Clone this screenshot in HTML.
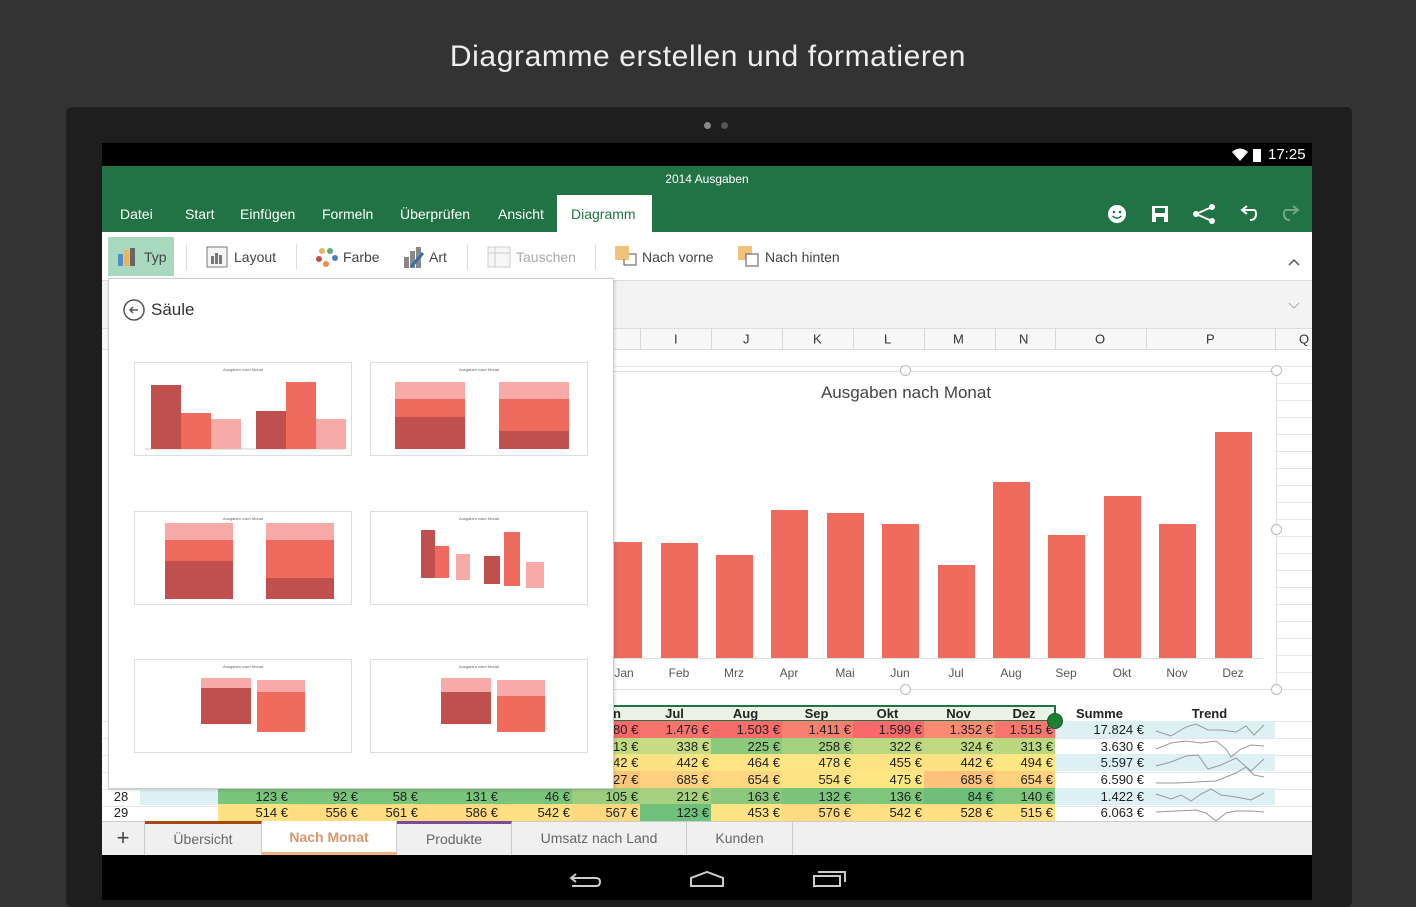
<!DOCTYPE html>
<html><head><meta charset="utf-8"><style>
*{margin:0;padding:0;box-sizing:border-box}
body{width:1416px;height:900px;background:#333;position:relative;overflow:hidden;font-family:"Liberation Sans",sans-serif}
.a{position:absolute}
.row{position:absolute;display:flex;height:17px;font-size:13px;color:#222}
.row div{text-align:right;padding-right:2px;line-height:17px;white-space:nowrap;overflow:hidden}
.tab{position:absolute;top:214px;color:#fff;font-size:14px;transform:translateY(-50%)}
.rb{position:absolute;top:257px;transform:translateY(-50%);font-size:14px;color:#444}
.th{position:absolute;top:339px;transform:translateY(-50%);font-size:13px;color:#333}
.vl{position:absolute;top:328px;width:1px;height:22px;background:#d8d8d8}
.st{position:absolute;top:821px;height:34px;line-height:34px;text-align:center;font-size:14px;color:#666;border-right:1px solid #ccc}
.ml{position:absolute;top:673px;transform:translate(-50%,-50%);font-size:12px;color:#555}
.bar{position:absolute;background:#ef6b5e;width:37px}
.thb{position:absolute;width:218px;height:94px;background:#fff;border:1px solid #ddd}
</style></head><body>
<div class="a" style="left:0;width:1416px;top:40px;text-align:center;color:#eee;font-size:30px;letter-spacing:.6px">Diagramme erstellen und formatieren</div>
<div class="a" style="left:66px;top:107px;width:1286px;height:800px;background:#1e1e1e;border-radius:6px"></div>
<div class="a" style="left:704px;top:122px;width:7px;height:7px;border-radius:50%;background:#888"></div>
<div class="a" style="left:721px;top:122px;width:7px;height:7px;border-radius:50%;background:#555"></div>
<div class="a" style="left:102px;top:143px;width:1210px;height:757px;background:#fff"></div>
<div class="a" style="left:102px;top:143px;width:1210px;height:23px;background:#000"></div>
<svg class="a" style="left:1230px;top:146px" width="40" height="18"><path d="M2 6 Q10 -1 18 6 L10 15 Z" fill="#fff"/><rect x="23" y="3" width="8" height="13" fill="#fff"/></svg>
<div class="a" style="left:1268px;top:146px;color:#fff;font-size:15px">17:25</div>
<div class="a" style="left:102px;top:166px;width:1210px;height:66px;background:#217346"></div>
<div class="a" style="left:102px;top:172px;width:1210px;text-align:center;color:#fff;font-size:12px">2014 Ausgaben</div>
<div class="tab" style="left:120px">Datei</div>
<div class="tab" style="left:185px">Start</div>
<div class="tab" style="left:240px">Einfügen</div>
<div class="tab" style="left:322px">Formeln</div>
<div class="tab" style="left:400px">Überprüfen</div>
<div class="tab" style="left:498px">Ansicht</div>
<div class="a" style="left:557px;top:195px;width:95px;height:38px;background:#fff"></div>
<div class="tab" style="left:571px;color:#217346">Diagramm</div>
<svg class="a" style="left:1100px;top:198px" width="210" height="32">
<circle cx="17" cy="16" r="9" fill="#fff"/><circle cx="14" cy="14" r="1.3" fill="#217346"/><circle cx="20" cy="14" r="1.3" fill="#217346"/><path d="M12.5 18 Q17 22 21.5 18" stroke="#217346" stroke-width="1.5" fill="none"/>
<rect x="52" y="8" width="16" height="16" fill="#fff"/><rect x="55" y="10" width="10" height="5" fill="#217346"/><rect x="56" y="19" width="8" height="5" fill="#217346"/>
<circle cx="112" cy="9" r="3" fill="#fff"/><circle cx="96" cy="16" r="3" fill="#fff"/><circle cx="112" cy="23" r="3" fill="#fff"/><path d="M112 9 L96 16 L112 23" stroke="#fff" stroke-width="2" fill="none"/>
<path d="M143 12 L154 12 Q156 12 156 16 Q156 22 150 22" stroke="#fff" stroke-width="2" fill="none"/><path d="M147 8 L142 12 L147 16" stroke="#fff" stroke-width="2" fill="none"/>
<path d="M197 12 L186 12 Q184 12 184 16 Q184 22 190 22" stroke="#6fa888" stroke-width="2" fill="none"/><path d="M193 8 L198 12 L193 16" stroke="#6fa888" stroke-width="2" fill="none"/>
</svg>
<div class="a" style="left:102px;top:280px;width:1210px;height:1px;background:#ddd"></div>
<div class="a" style="left:108px;top:237px;width:66px;height:39px;background:#a8d8bd"></div>
<svg class="a" style="left:116px;top:248px" width="24" height="18"><rect x="2" y="6" width="5" height="12" fill="#4a8fce"/><rect x="8" y="2" width="5" height="16" fill="#e9b35f"/><rect x="14" y="0" width="5" height="18" fill="#666"/></svg>
<div class="rb" style="left:144px">Typ</div>
<div class="a" style="left:186px;top:244px;width:1px;height:26px;background:#ddd"></div>
<svg class="a" style="left:206px;top:246px" width="22" height="22"><rect x="1" y="1" width="20" height="20" fill="#f4f4f4" stroke="#777"/><rect x="5" y="10" width="3" height="8" fill="#777"/><rect x="9" y="7" width="3" height="11" fill="#777"/><rect x="13" y="9" width="3" height="9" fill="#777"/></svg>
<div class="rb" style="left:234px">Layout</div>
<div class="a" style="left:296px;top:244px;width:1px;height:26px;background:#ddd"></div>
<svg class="a" style="left:315px;top:246px" width="24" height="22"><circle cx="7" cy="5" r="3" fill="#e9b35f"/><circle cx="15" cy="5" r="3" fill="#5aab84"/><circle cx="4" cy="13" r="3" fill="#c0504d"/><circle cx="20" cy="12" r="3" fill="#4a7fc0"/><circle cx="11" cy="18" r="3" fill="#f08a4b"/></svg>
<div class="rb" style="left:343px">Farbe</div>
<svg class="a" style="left:403px;top:245px" width="24" height="24"><rect x="1" y="12" width="5" height="11" fill="#888"/><rect x="7" y="6" width="5" height="17" fill="#888"/><rect x="13" y="2" width="5" height="21" fill="#888"/><path d="M8 22 L20 8" stroke="#3b6ea8" stroke-width="3"/></svg>
<div class="rb" style="left:429px">Art</div>
<div class="a" style="left:467px;top:244px;width:1px;height:26px;background:#ddd"></div>
<svg class="a" style="left:487px;top:245px" width="24" height="24"><rect x="1" y="2" width="22" height="20" fill="#f6f6f6" stroke="#ccc"/><path d="M1 8 H23 M8 2 V22" stroke="#ccc"/></svg>
<div class="rb" style="left:516px;color:#aaa">Tauschen</div>
<div class="a" style="left:595px;top:244px;width:1px;height:26px;background:#ddd"></div>
<svg class="a" style="left:614px;top:245px" width="24" height="22"><rect x="1" y="1" width="14" height="14" fill="#f0c27a"/><path d="M10 14 V20 H22 V9 H15" stroke="#555" fill="none"/></svg>
<div class="rb" style="left:642px">Nach vorne</div>
<svg class="a" style="left:737px;top:245px" width="24" height="22"><rect x="1" y="1" width="14" height="14" fill="#f0c27a"/><rect x="9" y="9" width="12" height="12" fill="#fff" stroke="#555"/></svg>
<div class="rb" style="left:765px">Nach hinten</div>
<svg class="a" style="left:1287px;top:257px" width="14" height="10"><path d="M2 8 L7 3 L12 8" stroke="#555" stroke-width="1.5" fill="none"/></svg>
<div class="a" style="left:102px;top:281px;width:1210px;height:47px;background:#f3f3f3"></div>
<svg class="a" style="left:1288px;top:302px" width="12" height="8"><path d="M1 1 L6 6 L11 1" stroke="#aaa" fill="none"/></svg>
<div class="a" style="left:102px;top:328px;width:1210px;height:22px;background:#f7f7f7;border-top:1px solid #ddd;border-bottom:1px solid #ddd"></div>
<div class="vl" style="left:640px"></div><div class="vl" style="left:711px"></div><div class="vl" style="left:782px"></div><div class="vl" style="left:853px"></div><div class="vl" style="left:924px"></div><div class="vl" style="left:995px"></div><div class="vl" style="left:1055px"></div><div class="vl" style="left:1146px"></div><div class="vl" style="left:1275px"></div>
<div class="th" style="left:674px">I</div><div class="th" style="left:743px">J</div><div class="th" style="left:813px">K</div><div class="th" style="left:884px">L</div><div class="th" style="left:953px">M</div><div class="th" style="left:1019px">N</div><div class="th" style="left:1095px">O</div><div class="th" style="left:1206px">P</div><div class="th" style="left:1299px">Q</div>
<div class="a" style="left:613px;top:350px;width:699px;height:355px;background:repeating-linear-gradient(#fff 0 16px,#e6e6e6 16px 17px)"></div>
<div class="a" style="left:613px;top:371px;width:664px;height:319px;background:#fff;border:1px solid #ddd"></div>
<div class="a" style="left:706px;top:383px;width:400px;text-align:center;font-size:17px;color:#444">Ausgaben nach Monat</div>
<div class="bar" style="left:605px;top:542px;height:116px"></div>
<div class="bar" style="left:661px;top:543px;height:115px"></div>
<div class="bar" style="left:716px;top:555px;height:103px"></div>
<div class="bar" style="left:771px;top:510px;height:148px"></div>
<div class="bar" style="left:827px;top:513px;height:145px"></div>
<div class="bar" style="left:882px;top:524px;height:134px"></div>
<div class="bar" style="left:938px;top:565px;height:93px"></div>
<div class="bar" style="left:993px;top:482px;height:176px"></div>
<div class="bar" style="left:1048px;top:535px;height:123px"></div>
<div class="bar" style="left:1104px;top:496px;height:162px"></div>
<div class="bar" style="left:1159px;top:524px;height:134px"></div>
<div class="bar" style="left:1215px;top:432px;height:226px"></div>
<div class="a" style="left:613px;top:658px;width:650px;height:1px;background:#ddd"></div>
<div class="ml" style="left:624px">Jan</div><div class="ml" style="left:679px">Feb</div><div class="ml" style="left:734px">Mrz</div><div class="ml" style="left:789px">Apr</div><div class="ml" style="left:845px">Mai</div><div class="ml" style="left:900px">Jun</div><div class="ml" style="left:956px">Jul</div><div class="ml" style="left:1011px">Aug</div><div class="ml" style="left:1066px">Sep</div><div class="ml" style="left:1122px">Okt</div><div class="ml" style="left:1177px">Nov</div><div class="ml" style="left:1233px">Dez</div>
<div class="a" style="left:1271px;top:365px;width:11px;height:11px;border:1px solid #bbb;border-radius:50%;background:#fff"></div>
<div class="a" style="left:1271px;top:524px;width:11px;height:11px;border:1px solid #bbb;border-radius:50%;background:#fff"></div>
<div class="a" style="left:1271px;top:684px;width:11px;height:11px;border:1px solid #bbb;border-radius:50%;background:#fff"></div>
<div class="a" style="left:900px;top:684px;width:11px;height:11px;border:1px solid #bbb;border-radius:50%;background:#fff"></div>
<div class="a" style="left:900px;top:365px;width:11px;height:11px;border:1px solid #bbb;border-radius:50%;background:#fff"></div>
<div class="a" style="left:102px;top:705px;width:1210px;height:116px;background:repeating-linear-gradient(#fff 0 16px,#e6e6e6 16px 17px)"></div>
<div class="row" style="left:613px;top:705px;font-weight:bold;background:#e9f2e5;border-top:2px solid #217346;border-bottom:2px solid #217346">
<div style="width:27px;text-align:left;line-height:14px">n</div><div style="width:71px;text-align:center;line-height:14px">Jul</div><div style="width:71px;text-align:center;line-height:14px">Aug</div><div style="width:71px;text-align:center;line-height:14px">Sep</div><div style="width:71px;text-align:center;line-height:14px">Okt</div><div style="width:71px;text-align:center;line-height:14px">Nov</div><div style="width:60px;text-align:center;line-height:14px">Dez</div></div>
<div class="a" style="left:1054px;top:705px;width:2px;height:16px;background:#217346"></div>
<div class="row" style="left:1055px;top:705px;font-weight:bold"><div style="width:91px;text-align:center">Summe</div><div style="width:129px;text-align:center">Trend</div></div>
<div class="row" style="left:613px;top:721px"><div style="width:27px;background:#f8696b">80 €</div><div style="width:71px;background:#f8736e">1.476 €</div><div style="width:71px;background:#f86b6b">1.503 €</div><div style="width:71px;background:#f98070">1.411 €</div><div style="width:71px;background:#f8696b">1.599 €</div><div style="width:71px;background:#f98b72">1.352 €</div><div style="width:60px;background:#f8766e">1.515 €</div><div style="width:91px;background:#ddf0f4">17.824 €</div><div style="width:129px;background:#ddf0f4"></div></div>
<div class="row" style="left:613px;top:738px"><div style="width:27px;background:#c0da81">13 €</div><div style="width:71px;background:#c6dc82">338 €</div><div style="width:71px;background:#8dc97d">225 €</div><div style="width:71px;background:#a4d07f">258 €</div><div style="width:71px;background:#bcd880">322 €</div><div style="width:71px;background:#bfd981">324 €</div><div style="width:60px;background:#bad880">313 €</div><div style="width:91px">3.630 €</div></div>
<div class="row" style="left:613px;top:754px"><div style="width:27px;background:#fde383">42 €</div><div style="width:71px;background:#fde283">442 €</div><div style="width:71px;background:#fee483">464 €</div><div style="width:71px;background:#fee583">478 €</div><div style="width:71px;background:#fee383">455 €</div><div style="width:71px;background:#fde283">442 €</div><div style="width:60px;background:#fee683">494 €</div><div style="width:91px;background:#ddf0f4">5.597 €</div><div style="width:129px;background:#ddf0f4"></div></div>
<div class="row" style="left:613px;top:771px"><div style="width:27px;background:#fcc57c">27 €</div><div style="width:71px;background:#fdd17f">685 €</div><div style="width:71px;background:#fdd880">654 €</div><div style="width:71px;background:#fee382">554 €</div><div style="width:71px;background:#fee783">475 €</div><div style="width:71px;background:#fcc27b">685 €</div><div style="width:60px;background:#fdd27f">654 €</div><div style="width:91px">6.590 €</div></div>
<div class="row" style="left:102px;top:788px"><div style="width:38px;text-align:center;padding:0">28</div><div style="width:78px;background:#ddf0f4"></div><div style="width:72px;background:#7bc47c">123 €</div><div style="width:70px;background:#7bc47c">92 €</div><div style="width:60px;background:#7bc47c">58 €</div><div style="width:80px;background:#7bc47c">131 €</div><div style="width:72px;background:#7bc47c">46 €</div><div style="width:68px;background:#9ccd7e">105 €</div><div style="width:71px;background:#a8d17f">212 €</div><div style="width:71px;background:#8bc87d">163 €</div><div style="width:71px;background:#7cc47c">132 €</div><div style="width:71px;background:#7fc57c">136 €</div><div style="width:71px;background:#6fbf7a">84 €</div><div style="width:60px;background:#7fc57c">140 €</div><div style="width:91px;background:#ddf0f4">1.422 €</div><div style="width:129px;background:#ddf0f4"></div></div>
<div class="row" style="left:102px;top:804px"><div style="width:38px;text-align:center;padding:0">29</div><div style="width:78px"></div><div style="width:72px;background:#fee182">514 €</div><div style="width:70px;background:#fedd81">556 €</div><div style="width:60px;background:#fedc81">561 €</div><div style="width:80px;background:#feda81">586 €</div><div style="width:72px;background:#fedf82">542 €</div><div style="width:68px;background:#fed880">567 €</div><div style="width:71px;background:#6fc07a">123 €</div><div style="width:71px;background:#fee382">453 €</div><div style="width:71px;background:#fedb81">576 €</div><div style="width:71px;background:#fedf82">542 €</div><div style="width:71px;background:#fee082">528 €</div><div style="width:60px;background:#fee182">515 €</div><div style="width:91px">6.063 €</div></div>
<svg class="a" style="left:1146px;top:721px" width="129" height="100"><g stroke="#999" fill="none" stroke-width="1">
<polyline points="10,10 25,15 40,6 50,3 62,9 75,9 90,11 100,5 108,14 118,4"/>
<polyline points="10,28 25,22 40,20 55,22 70,20 80,28 85,36 95,28 105,24 118,25"/>
<polyline points="10,45 25,41 40,35 52,34 62,48 75,44 90,37 105,50 118,38"/>
<polyline points="10,62 30,62 50,61 70,60 90,52 100,46 108,54 118,56"/>
<polyline points="10,73 25,78 35,74 45,80 55,73 65,68 75,74 90,76 105,79 118,72"/>
<polyline points="10,91 30,90 50,89 60,92 70,100 80,92 90,90 105,90 118,91"/>
</g></svg>
<div class="a" style="left:1047px;top:713px;width:16px;height:16px;border-radius:50%;background:#1e7e34;border:1px solid #0e5c22"></div>
<div class="a" style="left:108px;top:278px;width:506px;height:511px;background:#fff;border:1px solid #ccc;box-shadow:1px 1px 3px rgba(0,0,0,.15)"></div>
<svg class="a" style="left:122px;top:298px" width="24" height="24"><circle cx="12" cy="12" r="10" stroke="#555" stroke-width="1.5" fill="none"/><path d="M16 12 H8 M11 9 L8 12 L11 15" stroke="#555" stroke-width="1.5" fill="none"/></svg>
<div class="a" style="left:151px;top:300px;font-size:17px;color:#333">Säule</div>
<div class="thb" style="left:134px;top:362px"><svg width="216" height="92"><text x="108" y="8" font-size="4" text-anchor="middle" fill="#666">Ausgaben nach Monat</text><line x1="10" y1="86" x2="210" y2="86" stroke="#ccc"/><rect x="16" y="22" width="30" height="64" fill="#c0504d"/><rect x="46" y="50" width="30" height="36" fill="#ef6b5e"/><rect x="76" y="56" width="30" height="30" fill="#f7aaa7"/><rect x="121" y="48" width="30" height="38" fill="#c0504d"/><rect x="151" y="19" width="30" height="67" fill="#ef6b5e"/><rect x="181" y="56" width="30" height="30" fill="#f7aaa7"/></svg></div>
<div class="thb" style="left:370px;top:362px"><svg width="216" height="92"><text x="108" y="8" font-size="4" text-anchor="middle" fill="#666">Ausgaben nach Monat</text><rect x="24" y="19" width="70" height="17" fill="#f7aaa7"/><rect x="24" y="36" width="70" height="18" fill="#ef6b5e"/><rect x="24" y="54" width="70" height="32" fill="#c0504d"/><rect x="128" y="19" width="70" height="17" fill="#f7aaa7"/><rect x="128" y="36" width="70" height="32" fill="#ef6b5e"/><rect x="128" y="68" width="70" height="18" fill="#c0504d"/></svg></div>
<div class="thb" style="left:134px;top:511px"><svg width="216" height="92"><text x="108" y="8" font-size="4" text-anchor="middle" fill="#666">Ausgaben nach Monat</text><rect x="30" y="11" width="68" height="17" fill="#f7aaa7"/><rect x="30" y="28" width="68" height="21" fill="#ef6b5e"/><rect x="30" y="49" width="68" height="38" fill="#c0504d"/><rect x="131" y="11" width="68" height="17" fill="#f7aaa7"/><rect x="131" y="28" width="68" height="38" fill="#ef6b5e"/><rect x="131" y="66" width="68" height="21" fill="#c0504d"/></svg></div>
<div class="thb" style="left:370px;top:511px"><svg width="216" height="92"><text x="108" y="8" font-size="4" text-anchor="middle" fill="#666">Ausgaben nach Monat</text><rect x="50" y="18" width="14" height="48" fill="#c0504d"/><rect x="64" y="34" width="14" height="32" fill="#ef6b5e"/><rect x="85" y="42" width="14" height="26" fill="#f7aaa7"/><rect x="113" y="44" width="16" height="28" fill="#c0504d"/><rect x="133" y="20" width="16" height="54" fill="#ef6b5e"/><rect x="155" y="50" width="18" height="26" fill="#f7aaa7"/></svg></div>
<div class="thb" style="left:134px;top:659px"><svg width="216" height="92"><text x="108" y="8" font-size="4" text-anchor="middle" fill="#666">Ausgaben nach Monat</text><rect x="66" y="18" width="50" height="10" fill="#f7aaa7"/><rect x="66" y="28" width="50" height="36" fill="#c0504d"/><rect x="122" y="20" width="48" height="12" fill="#f7aaa7"/><rect x="122" y="32" width="48" height="40" fill="#ef6b5e"/></svg></div>
<div class="thb" style="left:370px;top:659px"><svg width="216" height="92"><text x="108" y="8" font-size="4" text-anchor="middle" fill="#666">Ausgaben nach Monat</text><rect x="70" y="18" width="50" height="14" fill="#f7aaa7"/><rect x="70" y="32" width="50" height="32" fill="#c0504d"/><rect x="126" y="20" width="48" height="16" fill="#f7aaa7"/><rect x="126" y="36" width="48" height="36" fill="#ef6b5e"/></svg></div>
<div class="a" style="left:102px;top:821px;width:1210px;height:34px;background:#f0f0f0;border-top:1px solid #ccc"></div>
<div class="st" style="left:102px;width:43px;font-size:22px;color:#444">+</div>
<div class="st" style="left:145px;width:117px;border-top:3px solid #a64a10;line-height:30px">Übersicht</div>
<div class="st" style="left:262px;width:135px;background:#fff;color:#d8976a;font-weight:bold;border-bottom:3px solid #f0b07f;line-height:32px">Nach Monat</div>
<div class="st" style="left:397px;width:115px;border-top:3px solid #7b4a9e;line-height:30px">Produkte</div>
<div class="st" style="left:512px;width:175px">Umsatz nach Land</div>
<div class="st" style="left:687px;width:106px">Kunden</div>
<div class="a" style="left:102px;top:855px;width:1210px;height:45px;background:#000"></div>
<svg class="a" style="left:560px;top:864px" width="300" height="30"><path d="M12 14 H36 Q40 14 40 18 Q40 22 36 22 H12 M16 10 L11 14 L16 18" stroke="#ccc" stroke-width="2" fill="none"/><path d="M131 22 V14 L147 8 L163 14 V22 Z" stroke="#ccc" stroke-width="2" fill="none"/><rect x="254" y="12" width="26" height="10" stroke="#ccc" stroke-width="2" fill="none"/><path d="M258 8 H285 V18" stroke="#ccc" stroke-width="2" fill="none"/></svg>
</body></html>
